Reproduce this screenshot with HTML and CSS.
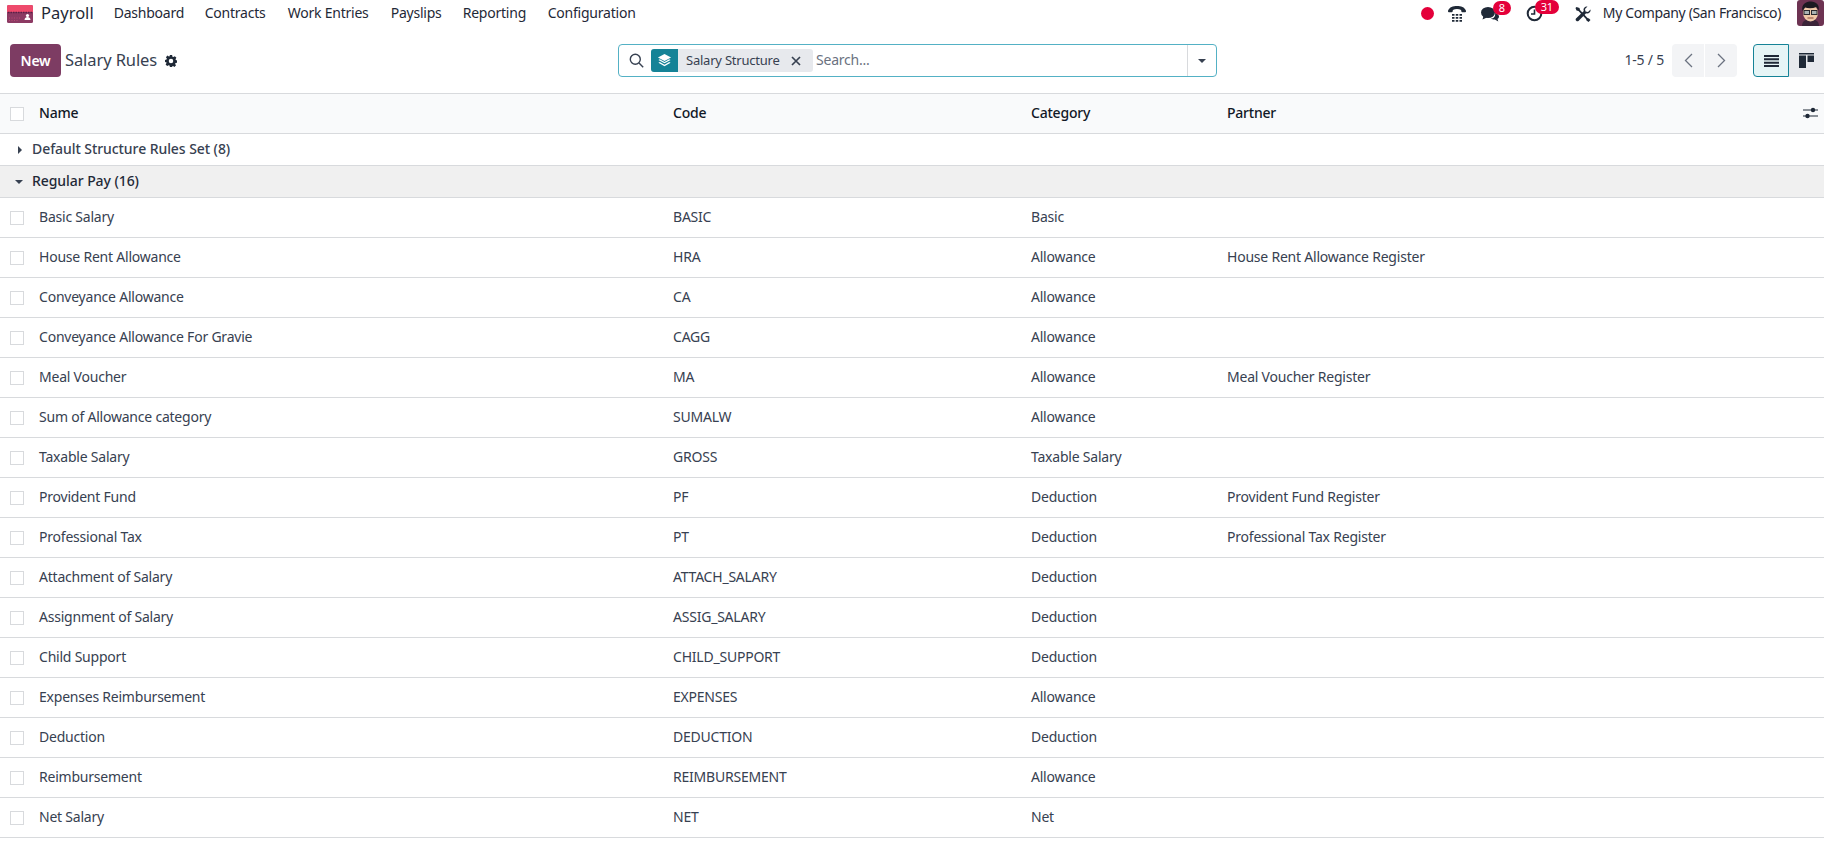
FILE: index.html
```html
<!DOCTYPE html>
<html lang="en">
<head>
  <meta charset="UTF-8" />
  <meta name="viewport" content="width=device-width, initial-scale=1.0" />
  <title>Salary Rules</title>
  <link rel="stylesheet" href="styles.css">
</head>
<body>
  <header class="topbar">
    <svg class="app-logo" width="26" height="18" viewBox="0 0 26 18">
      <rect width="26" height="18" rx="1.5" fill="#8c3a63"/>
      <path d="M1.5 0h23A1.5 1.5 0 0 1 26 1.5V7H0V1.500A1.500 1.500 0 0 1 1.500 0z" fill="#ee4a6c"/>
      <path d="M1 7.500h24" stroke="#5a1f45" stroke-width="1.500" stroke-dasharray="1.500 1"/>
      <circle cx="20.500" cy="10.500" r="1.600" fill="#fff"/>
      <path d="M17.500 15c.3-2.200 1.500-3 3-3s2.700.8 3 3z" fill="#fff"/>
      <path d="M2 13h11M2 15.500h9" stroke="#b84b75" stroke-dasharray="1 1.500"/>
    </svg>
    <span class="app-name">Payroll</span>
    <nav class="menu">
      <a>Dashboard</a>
      <a>Contracts</a>
      <a>Work Entries</a>
      <a>Payslips</a>
      <a>Reporting</a>
      <a>Configuration</a>
    </nav>
    <div class="systray">
      <span class="rec-dot"></span>
      <svg class="tray-icon phone" width="18" height="16" viewBox="0 0 18 16">
        <path d="M0 4.800C1.500 1 5 0 9 0s7.500 1 9 4.800c.2.900-.2 1.400-.8 1.400h-2.900c-.6 0-.9-.4-1-1l-.2-1.300C12 3.400 10.500 3.100 9 3.100s-3 .3-4.100.8l-.2 1.300c-.1.600-.4 1-1 1H.8C.2 6.200-.2 5.700 0 4.800z" fill="#1f2937"/>
        <path d="M4 8h2.500v1.800H4zM7.750 8h2.500v1.800h-2.500zM11.500 8H14v1.800h-2.500zM4 11h2.500v1.800H4zM7.750 11h2.500v1.800h-2.500zM11.500 11H14v1.800h-2.500zM4 14h2.500v1.800H4zM7.750 14h2.500v1.800h-2.500zM11.500 14H14v1.800h-2.500z" fill="#1f2937"/>
      </svg>
      <span class="tray-item chat">
        <svg width="18" height="16" viewBox="0 0 18 16">
          <ellipse cx="7" cy="6.500" rx="7" ry="5.500" fill="#1f2937"/>
          <path d="M2.500 10 1.500 13.500 6 11.500z" fill="#1f2937"/>
          <path d="M14 7c2.500.5 4 2 4 3.500 0 1-.6 2-1.500 2.500l.8 2.500-3.500-2c-1.500 0-3-.3-4-1 3 0 5-2 4.200-5.500z" fill="#1f2937"/>
        </svg>
        <b class="badge">8</b>
      </span>
      <span class="tray-item clock">
        <svg width="17" height="17" viewBox="0 0 17 17">
          <circle cx="8.500" cy="8.500" r="6.800" fill="none" stroke="#1f2937" stroke-width="2"/>
          <path d="M8.500 4.500v4.500H5" fill="none" stroke="#1f2937" stroke-width="1.600"/>
        </svg>
        <b class="badge">31</b>
      </span>
      <svg class="tray-icon tools" width="16" height="16" viewBox="0 0 16 16">
        <path d="M1.500 1 .5 2l1 2.500 2 .5 7.500 8 .5 1.500L13.500 16l2-2-1.500-1.500-1.500-.5-7.500-8L4.500 2z" fill="#1f2937"/>
        <path d="M15.500 3.500 13 6l-2.500-.5-.5-2.500L12.500.5C10.500 0 8.500 1.500 8.500 3.500c0 .5.100 1 .3 1.400L1 12.500a1.800 1.800 0 0 0 2.500 2.500l7.600-7.800c2.400.8 5-1.200 4.400-3.700z" fill="#1f2937"/>
      </svg>
      <span class="company">My Company (San Francisco)</span>
      <svg class="avatar" width="27" height="26" viewBox="0 0 27 26">
        <rect width="27" height="26" rx="3" fill="#6d3352"/>
        <path d="M5 26c0-5 4-7 8.500-7S22 21 22 26z" fill="#3b2438"/>
        <ellipse cx="13.500" cy="13" rx="7.500" ry="8.500" fill="#efc9a8"/>
        <path d="M5.500 11C4 4 9 1.500 14 1.500S23 5 21.500 10.500L19.500 7c-4 1.500-8 1.500-11.500.5z" fill="#1b1a22"/>
        <rect x="7" y="10.500" width="5.500" height="4" fill="#a9b3b3" stroke="#2a2a2e"/>
        <rect x="14.500" y="10.500" width="5.500" height="4" fill="#a9b3b3" stroke="#2a2a2e"/>
        <path d="M10.500 18h6" stroke="#8a4a3a"/>
      </svg>
    </div>
  </header>

  <div class="control-panel">
    <div class="cp-left">
      <button class="btn-new">New</button>
      <span class="page-title">Salary Rules</span>
      <svg class="gear" width="12" height="12" viewBox="0 0 16 16">
        <path fill-rule="evenodd" d="M6.500 0h3l.4 2.200 1.300.6L13.100 1.500l2.100 2.100L14 5.500l.5 1.300 1.500.4v3l-2 .4-.5 1.300 1.200 1.900-2.100 2.100-1.900-1.200-1.300.5L9.500 16h-3l-.4-2-1.300-.5-1.900 1.200L.8 12.600 2 10.700l-.5-1.300L0 9.500v-3l2-.4.500-1.300L1.200 2.900 3.300.8l1.900 1.300 1-.4zM8 5a3 3 0 1 0 0 6 3 3 0 0 0 0-6z" fill="#1f2937"/>
      </svg>
    </div>
    <div class="searchbox">
      <svg class="search-icon" width="15" height="15" viewBox="0 0 15 15">
        <circle cx="6.300" cy="6.300" r="5" fill="none" stroke="#374151" stroke-width="1.400"/>
        <path d="m10 10 4.200 4.200" stroke="#374151" stroke-width="1.400"/>
      </svg>
      <div class="facet">
        <span class="facet-icon">
          <svg width="15" height="15" viewBox="0 0 16 16">
            <path d="M8 1 15 4.800 8 8.500 1 4.800z" fill="#fff"/>
            <path d="m1.500 7.500 1.500-.8L8 9.500l5-2.800 1.500.8L8 11zM1.500 10.500l1.500-.8L8 12.500l5-2.800 1.500.8L8 14z" fill="#fff"/>
          </svg>
        </span>
        <span class="facet-label">Salary Structure</span>
        <svg class="facet-close" width="10" height="10" viewBox="0 0 10 10">
          <path d="m1 1 8 8M9 1 1 9" stroke="#374151" stroke-width="1.700"/>
        </svg>
      </div>
      <span class="search-placeholder">Search...</span>
      <span class="search-toggle"><i class="caret-down"></i></span>
    </div>
    <div class="cp-right">
      <span class="pager-text">1-5 / 5</span>
      <div class="pager">
        <span class="pager-btn">
          <svg width="9" height="15" viewBox="0 0 9 15"><path d="M8 1 1.500 7.500 8 14" fill="none" stroke="#6b7280" stroke-width="1.300"/></svg>
        </span>
        <span class="pager-btn">
          <svg width="9" height="15" viewBox="0 0 9 15"><path d="m1 1 6.500 6.500L1 14" fill="none" stroke="#6b7280" stroke-width="1.300"/></svg>
        </span>
      </div>
      <div class="views">
        <span class="view-btn active">
          <svg width="15" height="12" viewBox="0 0 15 12"><path d="M0 0h15v2H0zM0 3.300h15v2H0zM0 6.700h15v2H0zM0 10h15v2H0z" fill="#1f2937"/></svg>
        </span>
        <span class="view-btn">
          <svg width="15" height="15" viewBox="0 0 15 15"><path d="M0 0h15v1.500H0zM0 2.500h7V15H0zM8.500 2.500H15V9H8.500z" fill="#1f2937"/></svg>
        </span>
      </div>
    </div>
  </div>

  <div class="list">
    <div class="row head">
      <span class="check"></span><span>Name</span><span>Code</span><span>Category</span><span class="partner-head">Partner
        <svg width="15" height="12" viewBox="0 0 15 12"><path d="M0 3h15M0 9h15" stroke="#1f2937" stroke-width="1.100"/><circle cx="10" cy="3" r="2.200" fill="#1f2937"/><circle cx="4.500" cy="9" r="2.200" fill="#1f2937"/></svg>
      </span>
    </div>
    <div class="group"><i class="caret-right"></i>Default Structure Rules Set (8)</div>
    <div class="group open"><i class="caret-down"></i>Regular Pay (16)</div>
    <div class="row"><span class="check"></span><span>Basic Salary</span><span>BASIC</span><span>Basic</span><span></span></div>
    <div class="row"><span class="check"></span><span>House Rent Allowance</span><span>HRA</span><span>Allowance</span><span>House Rent Allowance Register</span></div>
    <div class="row"><span class="check"></span><span>Conveyance Allowance</span><span>CA</span><span>Allowance</span><span></span></div>
    <div class="row"><span class="check"></span><span>Conveyance Allowance For Gravie</span><span>CAGG</span><span>Allowance</span><span></span></div>
    <div class="row"><span class="check"></span><span>Meal Voucher</span><span>MA</span><span>Allowance</span><span>Meal Voucher Register</span></div>
    <div class="row"><span class="check"></span><span>Sum of Allowance category</span><span>SUMALW</span><span>Allowance</span><span></span></div>
    <div class="row"><span class="check"></span><span>Taxable Salary</span><span>GROSS</span><span>Taxable Salary</span><span></span></div>
    <div class="row"><span class="check"></span><span>Provident Fund</span><span>PF</span><span>Deduction</span><span>Provident Fund Register</span></div>
    <div class="row"><span class="check"></span><span>Professional Tax</span><span>PT</span><span>Deduction</span><span>Professional Tax Register</span></div>
    <div class="row"><span class="check"></span><span>Attachment of Salary</span><span>ATTACH_SALARY</span><span>Deduction</span><span></span></div>
    <div class="row"><span class="check"></span><span>Assignment of Salary</span><span>ASSIG_SALARY</span><span>Deduction</span><span></span></div>
    <div class="row"><span class="check"></span><span>Child Support</span><span>CHILD_SUPPORT</span><span>Deduction</span><span></span></div>
    <div class="row"><span class="check"></span><span>Expenses Reimbursement</span><span>EXPENSES</span><span>Allowance</span><span></span></div>
    <div class="row"><span class="check"></span><span>Deduction</span><span>DEDUCTION</span><span>Deduction</span><span></span></div>
    <div class="row"><span class="check"></span><span>Reimbursement</span><span>REIMBURSEMENT</span><span>Allowance</span><span></span></div>
    <div class="row"><span class="check"></span><span>Net Salary</span><span>NET</span><span>Net</span><span></span></div>
  </div>
</body>
</html>
```

FILE: styles.css
```css
* { box-sizing: border-box; }
html, body { height: 100%; overflow: hidden; }
body {
  margin: 0;
  background: #fff;
  color: #374151;
  font-family: "Noto Sans", sans-serif;
  font-size: 14px;
  letter-spacing: -0.22px;
}

/* top bar */
.topbar {
  display: flex;
  align-items: center;
  height: 27px;
  padding-left: 7px;
  color: #1f2937;
}
.app-logo { margin-top: 1px; }
.app-name {
  margin-left: 8px;
  padding-bottom: 2px;
  font-size: 16.500px;
  letter-spacing: 0;
}
.menu {
  display: flex;
  margin-left: 20px;
  padding-bottom: 2px;
}
.menu a:nth-child(1) { width: 91px; }
.menu a:nth-child(2) { width: 83px; }
.menu a:nth-child(3) { width: 103px; }
.menu a:nth-child(4) { width: 72px; }
.menu a:nth-child(5) { width: 85px; }
.systray {
  display: flex;
  align-items: center;
  margin-left: auto;
  height: 100%;
}
.rec-dot {
  width: 13px;
  height: 13px;
  border-radius: 50%;
  background: #e4003a;
}
.phone { margin-left: 14px; }
.tray-item {
  position: relative;
  display: flex;
}
.chat { margin-left: 15px; }
.clock { margin-left: 27px; }
.tools { margin-left: 32px; }
.badge {
  position: absolute;
  top: -5px;
  height: 14px;
  min-width: 18px;
  padding: 0 4px;
  border-radius: 8px;
  background: #e4003a;
  color: #fff;
  font-size: 11px;
  font-weight: 400;
  line-height: 14px;
  text-align: center;
}
.chat .badge { left: 12px; }
.clock .badge { left: 9px; min-width: 24px; }
.company {
  margin-left: 12px;
  padding-bottom: 2px;
  letter-spacing: -0.36px;
}
.avatar { margin-left: 16px; margin-top: -1px; }

/* control panel */
.control-panel {
  display: grid;
  grid-template-columns: 618px 599px 1fr;
  align-items: center;
  height: 67px;
  padding-top: 1px;
  border-bottom: 1px solid #d8dadd;
}
.cp-left {
  display: flex;
  align-items: center;
  padding-left: 10px;
}
.btn-new {
  width: 51px;
  height: 33px;
  border: 0;
  border-radius: 4px;
  background: #7d3c63;
  color: #fff;
  font: 600 14px "Noto Sans", sans-serif;
  letter-spacing: -0.22px;
}
.page-title {
  margin-left: 4px;
  padding-bottom: 2px;
  font-size: 16.500px;
  letter-spacing: -0.1px;
}
.gear { margin-left: 8px; }
.searchbox {
  display: flex;
  align-items: center;
  height: 33px;
  border: 1px solid #54b1c5;
  border-radius: 4px;
  padding-left: 10px;
}
.search-icon { flex: none; }
.facet {
  display: flex;
  align-items: center;
  width: 162px;
  height: 23px;
  margin-left: 7px;
  border-radius: 3px;
  background: #e7e9ed;
  font-size: 13px;
}
.facet-icon {
  display: flex;
  align-items: center;
  justify-content: center;
  width: 27px;
  height: 100%;
  border-radius: 3px 0 0 3px;
  background: #158397;
}
.facet-label { margin-left: 8px; padding-bottom: 1px; }
.facet-close { margin-left: auto; margin-right: 12px; }
.search-placeholder {
  margin-left: 3px;
  padding-bottom: 2px;
  color: #6b7280;
}
.search-toggle {
  display: flex;
  align-items: center;
  justify-content: center;
  align-self: stretch;
  width: 29px;
  margin-left: auto;
  border-left: 1px solid #d8dadd;
}
.caret-down {
  display: inline-block;
  border-left: 4.500px solid transparent;
  border-right: 4.500px solid transparent;
  border-top: 4.500px solid #374151;
}
.caret-right {
  display: inline-block;
  border-top: 4px solid transparent;
  border-bottom: 4px solid transparent;
  border-left: 4px solid #374151;
}
.cp-right {
  display: flex;
  align-items: center;
  justify-content: flex-end;
}
.pager-text { padding-bottom: 2px; }
.pager {
  display: flex;
  gap: 1px;
  margin-left: 8px;
}
.pager-btn {
  display: flex;
  align-items: center;
  justify-content: center;
  width: 32px;
  height: 33px;
  background: #f3f4f6;
}
.pager-btn:first-child { border-radius: 4px 0 0 4px; }
.pager-btn:last-child { border-radius: 0 4px 4px 0; }
.views {
  display: flex;
  margin-left: 16px;
}
.view-btn {
  display: flex;
  align-items: center;
  justify-content: center;
  width: 35px;
  height: 33px;
  background: #e7e9ed;
}
.view-btn.active {
  width: 36px;
  border: 1px solid #158397;
  border-radius: 4px 0 0 4px;
  background: #e6f5f6;
}

/* list */
.row {
  display: grid;
  grid-template-columns: 39px 634px 358px 196px 1fr;
  align-items: center;
  height: 40px;
  border-bottom: 1px solid #d8dadd;
}
.row > span:not(.check) { padding-bottom: 2px; }
.head {
  background: #f9fafb;
  color: #111827;
  font-weight: 500;
}
.partner-head {
  display: flex;
  align-items: center;
  justify-content: space-between;
  padding-right: 6px;
}
.check {
  width: 14px;
  height: 14px;
  margin-left: 10px;
  border: 1px solid #d8dadd;
  background: #fff;
}
.group {
  display: flex;
  align-items: center;
  height: 32px;
  padding-left: 17px;
  padding-bottom: 2px;
  border-bottom: 1px solid #d8dadd;
  font-weight: 500;
  letter-spacing: -0.07px;
}
.group .caret-right { margin-top: 2px; margin-left: 1px; margin-right: 10px; }
.group .caret-down { margin-top: 2px; margin-left: -2px; margin-right: 9px; }
.group.open {
  background: #f0f0f0;
  color: #1f2937;
}
```
